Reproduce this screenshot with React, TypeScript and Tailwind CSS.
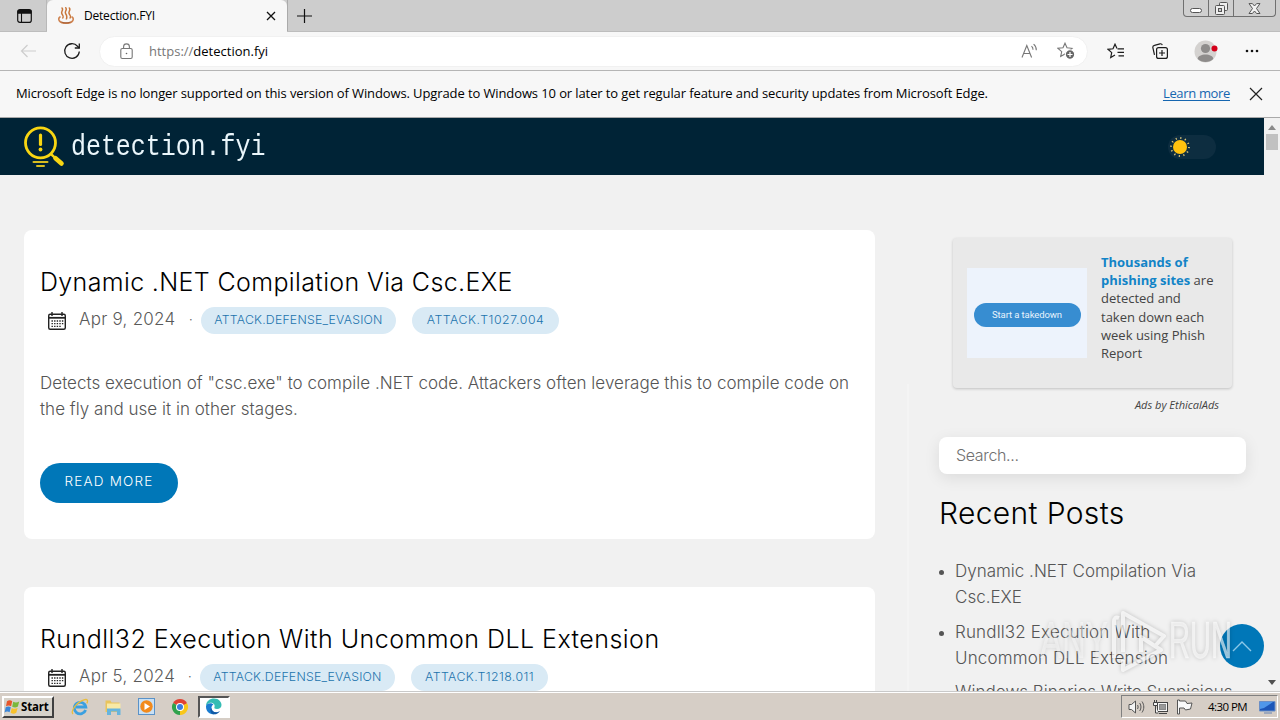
import type { ReactNode } from "react";

type Tag = { label: string; style: string };
type Post = { title: string; titleClass: string; date: string; dateClass: string; tags: Tag[]; body?: ReactNode };

const posts: Post[] = [
  {
    title: "Dynamic .NET Compilation Via Csc.EXE",
    titleClass: "tracking-[0.36px]",
    date: "Apr 9, 2024",
    dateClass: "w-[97px]",
    tags: [
      { label: "ATTACK.DEFENSE_EVASION", style: "w-[195px] tracking-[0.2px]" },
      { label: "ATTACK.T1027.004", style: "w-[147px] tracking-[0.55px]" },
    ],
    body: (
      <>
        Detects execution of "csc.exe" to compile .NET code. Attackers often leverage this to compile code on
        <br />
        the fly and use it in other stages.
      </>
    ),
  },
  {
    title: "Rundll32 Execution With Uncommon DLL Extension",
    titleClass: "tracking-[0.47px]",
    date: "Apr 5, 2024",
    dateClass: "w-[96px]",
    tags: [
      { label: "ATTACK.DEFENSE_EVASION", style: "w-[195px] tracking-[0.2px]" },
      { label: "ATTACK.T1218.011", style: "w-[137px] tracking-[0.4px]" },
    ],
  },
];

function TabStrip() {
  return (
    <div className="flex h-8 shrink-0 border-b border-[#bdbdbd] bg-[#cdcdcd]">
      <div className="flex w-[47px] items-center justify-center border-r border-[#b8b8b8]">
        <svg width="17" height="16" viewBox="0 0 16 16" fill="none" stroke="#111" className="ml-0.5 mt-px">
          <rect x="1.2" y="1.6" width="13.6" height="12.8" rx="2.2" strokeWidth="1.2" />
          <path d="M1.5 2.5h13v2.7h-13z" fill="#111" />
          <path d="M5 5v9" strokeWidth="1.1" />
        </svg>
      </div>
      <div className="-mb-px flex w-60 items-center rounded-t-md bg-[#f7f7f7] pl-[10px] pr-[9px]">
        <svg width="18" height="18" viewBox="0 0 18 18" fill="none" stroke="#c8763a" strokeLinecap="round">
          <path
            d="M5 1c2 2-1.6 3.8 0 6s1.500 2.500.8 4M8.700.8c2 2-1.600 3.800 0 6s1.500 2.800.8 5M12.300 1c2 2-1.600 3.800 0 6s1.500 2.500.8 4"
            strokeWidth="1.5"
          />
          <path d="M3 10C0 12 2.500 16.300 9 16.300S18 12 15 10" strokeWidth="1.6" stroke="#cf8350" />
          <path d="M5 15.200c2 .7 6 .7 8 0" strokeWidth="1.2" stroke="#a8623a" />
        </svg>
        <span className="ml-[9px] flex-1 text-[12px] tracking-[-0.2px]">Detection.FYI</span>
        <svg width="14" height="14" viewBox="0 0 14 14" stroke="#111" strokeWidth="1.3">
          <path d="m3 3 8 8M11 3l-8 8" />
        </svg>
      </div>
      <div className="flex items-center border-l border-[#aaa] pl-[8px]">
        <svg width="16" height="16" viewBox="0 0 16 16" stroke="#111" strokeWidth="1.2">
          <path d="M8.500 1v14M1 8h15" />
        </svg>
      </div>
      <div className="ml-auto mr-1 flex h-[17px] w-[93px] rounded-b border border-t-0 border-[#707070] bg-[#cfcfcf]">
        <div className="flex w-[25px] items-center justify-center border-r border-[#707070] pt-1">
          <div className="h-[5px] w-3 rounded-sm border border-[#555] bg-white" />
        </div>
        <div className="flex w-[25px] items-center justify-center border-r border-[#707070]">
          <svg width="13" height="13" viewBox="0 0 13 13" fill="#eee" stroke="#555">
            <rect x="4.5" y=".5" width="8" height="8" rx="1" />
            <rect x=".5" y="3.5" width="9" height="9" rx="1" />
            <rect x="3.5" y="6.5" width="3" height="3" fill="#ccc" />
          </svg>
        </div>
        <div className="flex flex-1 items-center justify-center">
          <svg width="13" height="11" viewBox="0 0 13 11" fill="#f2f2f2" stroke="#555">
            <path d="M1 .6h3.400L6.500 3 8.600.6H12L8.500 5.500l3.500 5H8.600L6.500 8l-2.100 2.500H1l3.500-5z" />
          </svg>
        </div>
      </div>
    </div>
  );
}

const star = "M8 1.200 10 5.800l5 .5-3.700 3.300 1 4.900L8 12l-4.300 2.500 1-4.900L1 6.300l5-.5z";

function Toolbar() {
  return (
    <div className="flex h-[39px] shrink-0 items-center border-b border-[#b5b5b5] bg-[#f7f7f7]">
      <svg className="ml-5" width="17" height="14" viewBox="0 0 17 14" fill="none" stroke="#cdcdcd" strokeWidth="1.2">
        <path d="M16 7H1.500M7.500 1l-6 6 6 6" />
      </svg>
      <svg className="ml-[26px]" width="18" height="18" viewBox="0 0 18 18" fill="none" stroke="#1c1c1c" strokeWidth="1.3">
        <path d="M16.300 9.500A7.300 7.300 0 1 1 14.500 4.200L16.300 6" />
        <path d="M16.300 1.500V6h-4.500" />
      </svg>
      <div className="ml-[18px] flex h-[31px] w-[989px] items-center rounded-full border border-[#f1f1f1] bg-white pl-5 pr-[11px]">
        <svg width="13" height="17" viewBox="0 0 13 17" fill="none" stroke="#777" strokeWidth="1.1">
          <rect x=".8" y="5.500" width="11.400" height="10" rx="1.500" />
          <path d="M3.600 5.500V3.800a2.900 2.900 0 0 1 5.800 0v1.700" />
          <circle cx="6.500" cy="10.500" r=".8" fill="#666" stroke="none" />
        </svg>
        <span className="ml-4 mt-px flex-1 text-[13px] text-black">
          <span className="text-[#777]">https://</span>detection.fyi
        </span>
        <svg width="17" height="16" viewBox="0 0 17 16" fill="none" stroke="#777" strokeWidth="1.1">
          <path d="M1 14.500 5.800 2.500l4.800 12M2.700 10.500h6.200M10.500 3.200c1.200 1 1.600 2.100 1.500 3.600M12.600 1.200c2 1.700 2.800 3.400 2.700 6" />
        </svg>
        <svg className="ml-[19px]" width="19" height="18" viewBox="0 0 19 18" fill="none" stroke="#777" strokeWidth="1.1">
          <path d={star} />
          <circle cx="13" cy="12.500" r="4.700" fill="#666" stroke="#fff" />
          <path d="M13 10v5M10.500 12.500h5" stroke="#fff" strokeWidth="1.2" />
        </svg>
      </div>
      <svg className="ml-[19px]" width="18" height="16" viewBox="0 0 18 16" fill="none" stroke="#1c1c1c" strokeWidth="1.2">
        <path d="M10 5.600 8 1.200 6 5.800l-5 .5 3.700 3.300-1 4.900L8 12" />
        <path d="M10.500 5.800H17M10.500 9.300H17M11.500 12.800H17" />
      </svg>
      <svg className="ml-[26px]" width="18" height="18" viewBox="0 0 18 18" fill="none" stroke="#1c1c1c" strokeWidth="1.2">
        <path d="M3.500 12.800 1.800 5.500a2 2 0 0 1 1.600-2.200L9 1.800a2 2 0 0 1 2.300 1.400" />
        <rect x="5.600" y="5.600" width="10.800" height="10.800" rx="2" />
        <path d="M11 8v6M8 11h6" />
      </svg>
      <svg className="ml-[25px]" width="24" height="24" viewBox="0 0 24 24">
        <circle cx="11.500" cy="12.500" r="11" fill="#d4d2d0" />
        <circle cx="11.500" cy="9.500" r="4.600" fill="#8e8c8b" />
        <path d="M3.700 20c0-6 15.600-6 15.600 0-4 4-11.600 4-15.600 0z" fill="#8e8c8b" />
        <circle cx="20.500" cy="9.500" r="3" fill="#d4001a" />
      </svg>
      <svg className="ml-[27px]" width="14" height="4" viewBox="0 0 14 4" fill="#111">
        <circle cx="2" cy="2" r="1.300" />
        <circle cx="7" cy="2" r="1.300" />
        <circle cx="12" cy="2" r="1.300" />
      </svg>
    </div>
  );
}

function Notice() {
  return (
    <div className="flex h-[47px] shrink-0 items-center border-b border-[#a9a9a9] bg-[#f7f7f7] pl-4 pr-[17px] text-[13px]">
      <span className="flex-1 whitespace-nowrap tracking-[-0.109px]">
        Microsoft Edge is no longer supported on this version of Windows. Upgrade to Windows 10 or later to get regular
        feature and security updates from Microsoft Edge.
      </span>
      <span className="mr-[19px] tracking-[-0.34px] text-[#1566b0] underline underline-offset-2">Learn more</span>
      <svg width="14" height="14" viewBox="0 0 14 14" stroke="#222" strokeWidth="1.2">
        <path d="m1 1 12 12M13 1 1 13" />
      </svg>
    </div>
  );
}

function SiteHeader() {
  return (
    <header className="flex h-[57px] items-center bg-[#002336] pl-6 pr-12">
      <svg width="41" height="42" viewBox="0 0 41 42" fill="none" stroke="#f8d512" strokeLinecap="round">
        <circle cx="16.500" cy="16.800" r="15" strokeWidth="2.8" />
        <path d="M16.500 9v9.500" strokeWidth="3.2" />
        <circle cx="16.500" cy="23.500" r="1.900" fill="#f8d512" stroke="none" />
        <path d="m27.500 28.500 2.500 2.300" strokeWidth="2.5" />
        <path d="m31.500 32.200 6 5.300" strokeWidth="4.6" />
        <path d="M9.500 36h14M13 40h7" strokeWidth="2" stroke="#d9bd20" />
      </svg>
      <span className="ml-[6px] mt-[3px] origin-center scale-y-115 font-[Liberation_Mono,monospace] text-[25px] leading-[30px] tracking-[-0.05px] text-[#eaf6fb]">
        detection.fyi
      </span>
      <div className="ml-auto flex h-6 w-12 items-center rounded-full bg-[#0d2d40]">
        <svg width="24" height="24" viewBox="0 0 24 24">
          <circle cx="12" cy="12" r="9" fill="none" stroke="#e0c878" strokeWidth="1.8" strokeDasharray="1.2 3.512" />
          <circle cx="12" cy="12" r="7" fill="#ffc20e" />
        </svg>
      </div>
    </header>
  );
}

function CalendarIcon() {
  return (
    <svg className="mt-px" width="20" height="18" viewBox="0 0 20 18" fill="none" stroke="#222" strokeWidth="1.4">
      <rect x="1.700" y="2.200" width="16.600" height="15" rx="1.500" />
      <path d="M1.700 5.800h16.600" strokeWidth="1.8" />
      <path d="M5 0v4M15 0v4" />
      <path d="M4.500 9h12M4.500 11.700h12M4.500 14.400h9.500" strokeDasharray="1.400 1.200" strokeWidth="1.3" />
    </svg>
  );
}

function PostCard({ post }: { post: Post }) {
  return (
    <article className="h-[309px] shrink-0 rounded-lg bg-white px-4 pt-[34px]">
      <h2 className={`whitespace-nowrap text-[25px] font-light leading-9 text-black ${post.titleClass}`}>{post.title}</h2>
      <div className="mt-[6px] flex h-7 items-center pl-[7px] text-[17px] font-light text-[#5a5a5a]">
        <CalendarIcon />
        <span className={`-mt-px ml-3 whitespace-nowrap tracking-[0.24px] ${post.dateClass}`}>{post.date}</span>
        <span className="ml-[13px] w-3 text-[13px]">·</span>
        {post.tags.map((tag) => (
          <span
            key={tag.label}
            className={`mr-4 flex h-[27px] items-center justify-center rounded-full bg-[#d9eaf5] text-[12.3px] text-[#1c74ad] ${tag.style}`}
          >
            {tag.label}
          </span>
        ))}
      </div>
      {post.body && (
        <>
          <p className="mt-[36px] whitespace-nowrap text-[17px] font-light leading-[26px] tracking-[0.024px] text-[#555]">
            {post.body}
          </p>
          <button className="mt-[41px] flex h-10 w-[138px] items-center justify-center rounded-full bg-[#0077b8] pb-[3px] text-[13.5px] font-light tracking-[1.2px] text-white">
            READ MORE
          </button>
        </>
      )}
    </article>
  );
}

function Recent({ children }: { children: ReactNode }) {
  return (
    <li className="flex">
      <span className="mr-[11px] mt-[12px] size-[5px] shrink-0 rounded-full bg-[#555]" />
      <span>{children}</span>
    </li>
  );
}

function Sidebar() {
  return (
    <aside className="flex w-[308px] flex-col">
      <div className="ml-[14px] mt-[63px] flex h-[150px] w-[279px] shrink-0 rounded-sm bg-[#e9e9e9] px-[14px] pt-[14px] font-[Open_Sans,Noto_Sans,sans-serif] shadow-[0_1px_3px_rgba(0,0,0,0.2)]">
        <div className="mt-4 flex h-[90px] w-[120px] shrink-0 items-center justify-center bg-[#edf3fc]">
          <span className="mt-1 flex h-6 w-[107px] items-center justify-center rounded-full bg-[#378dd1] font-[Roboto,sans-serif] text-[9.5px] tracking-[-0.1px] text-[#e8f3fc]">
            Start a takedown
          </span>
        </div>
        <p className="ml-[14px] mt-px whitespace-nowrap text-[13px] leading-[18.2px] text-[#444]">
          <b className="text-[#1284c7]">
            Thousands of
            <br />
            phishing sites
          </b>{" "}
          are
          <br />
          detected and
          <br />
          taken down each
          <br />
          week using Phish
          <br />
          Report
        </p>
      </div>
      <p className="mr-7 mt-[9px] text-right font-[Open_Sans,Noto_Sans,sans-serif] text-[11px] italic leading-4 text-[#444]">
        Ads by EthicalAds
      </p>
      <div className="mt-6 flex h-[37px] w-[307px] shrink-0 items-center rounded-lg bg-white pb-0.5 pl-[17px] text-[16px] font-light tracking-[-0.35px] text-[#707070] shadow-[0_4px_16px_rgba(0,0,0,0.09)]">
        Search...
      </div>
      <h2 className="mt-[21px] text-[30px] font-light leading-9 tracking-[0.35px] text-black">Recent Posts</h2>
      <ul className="mt-[27px] flex flex-col gap-2 whitespace-nowrap text-[17px] font-light leading-[26.3px] text-[#555]">
        <Recent>
          Dynamic .NET Compilation Via
          <br />
          Csc.EXE
        </Recent>
        <Recent>
          <span className="tracking-[0.15px]">
            Rundll32 Execution With
            <br />
            Uncommon DLL Extension
          </span>
        </Recent>
        <li className="pl-4">Windows Binaries Write Suspicious</li>
      </ul>
    </aside>
  );
}

function Scrollbar() {
  return (
    <div className="flex w-4 flex-col items-center bg-[#f1f1f1]">
      <svg className="mt-[7px]" width="8" height="5" viewBox="0 0 8 5" fill="#8a8a8a">
        <path d="M0 5 4 0l4 5z" />
      </svg>
      <div className="mt-1 h-4 w-3 bg-[#c1c1c1]" />
      <svg className="mb-[6px] mt-auto" width="8" height="5" viewBox="0 0 8 5" fill="#505050">
        <path d="M0 0h8L4 5z" />
      </svg>
    </div>
  );
}

function Watermark() {
  return (
    <svg
      className="absolute left-[1036px] top-[604px] font-[Liberation_Sans,sans-serif] drop-shadow-[0_0_2px_rgba(0,0,0,0.3)]"
      width="200"
      height="74"
      viewBox="0 0 200 74"
    >
      <g fill="#fff" fontSize="51">
        <text x="4" y="54" textLength="68" lengthAdjust="spacingAndGlyphs" fillOpacity="0.4">ANY</text>
        <text x="133" y="54" textLength="63" lengthAdjust="spacingAndGlyphs" fillOpacity="0.6" stroke="#fff" strokeOpacity="0.3">RUN</text>
      </g>
      <path
        d="M78 54V18q0-6 5-4M87 48V9l41 23-8 9M87 9v27M87 56v10l38-20-20-13v15"
        fill="none"
        stroke="#fff"
        strokeOpacity="0.7"
        strokeWidth="4"
        strokeLinejoin="round"
      />
    </svg>
  );
}

function Taskbar() {
  return (
    <div className="flex h-7 shrink-0 items-center border-t border-white bg-[#d6cec6] px-[2px]">
      <div className="flex h-[22px] w-[52px] items-center border-2 border-b-[#404040] border-l-white border-r-[#404040] border-t-white bg-[#d6d2ca]">
        <svg className="shrink-0" width="17" height="16" viewBox="0 0 16 16">
          <path d="M2.500 2.200c2-1.200 3.800-1 5.200 0L6.600 7.300c-1.600-1-3.300-1-5.100 0z" fill="#e8562a" />
          <path d="M8.700 2.800c2 1.200 3.800 1 6-.2l-1.300 5c-2 1.200-3.800 1-5.700.1z" fill="#7ab83c" />
          <path d="M1.200 8.300c2-1.200 3.600-1 5.100 0l-1.200 5c-1.500-1-3.200-1-5 .1z" fill="#3b86d8" />
          <path d="M7.300 9c2 1.200 3.800 1 5.800 0l-1.300 4.800c-2 1.300-3.800 1-5.700 0z" fill="#f8c22c" />
        </svg>
        <span className="text-[11.5px] font-bold leading-4 tracking-[-0.2px] text-black">Start</span>
      </div>
      <svg className="ml-[17px]" width="18" height="18" viewBox="0 0 18 18" fill="none">
        <path d="M14.600 12A5.800 5.800 0 1 1 14.800 9H5" stroke="#3ba0e0" strokeWidth="2.8" />
        <path d="M2 16C-1 13 6 4 13 1.800c4-1.200 4 1.500 2.800 3.500" stroke="#e9bd3c" strokeWidth="1.3" />
      </svg>
      <svg className="ml-[15px]" width="18" height="18" viewBox="0 0 18 18">
        <path d="M1.500 2.500h5l1 2h8V14h-14z" fill="#e9c45c" />
        <path d="M3 5.500h13.500V12H3z" fill="#f8e9a6" />
        <path d="M3 10.500h13.500V17h-3.500v-3.500H7V17H3z" fill="#66b4de" />
      </svg>
      <svg className="ml-4" width="17" height="17" viewBox="0 0 17 17">
        <rect x=".5" y=".5" width="16" height="16" fill="#c9e0f4" stroke="#5a92c8" />
        <circle cx="8.500" cy="8.500" r="6.200" fill="#f28a1c" />
        <path d="M6.500 5v7l5.500-3.500z" fill="#fff" />
      </svg>
      <svg className="ml-4" width="18" height="18" viewBox="0 0 18 18">
        <path d="M9 9 2.070 5a8 8 0 0 1 13.860 0z" fill="#e04234" />
        <path d="M9 9 15.930 5A8 8 0 0 1 9 17z" fill="#f9c718" />
        <path d="M9 9v8A8 8 0 0 1 2.070 5z" fill="#2fa24c" />
        <path d="M9 5h6.900L9 9z" fill="#e04234" />
        <circle cx="9" cy="9" r="4" fill="#fff" />
        <circle cx="9" cy="9" r="3" fill="#3b7de0" />
      </svg>
      <div className="ml-[9px] flex h-[22px] w-8 items-center justify-center border-2 border-b-white border-l-[#555] border-r-white border-t-[#555] bg-white">
        <svg className="-ml-0.5" width="17" height="17" viewBox="0 0 17 17">
          <path
            d="M1 8C1 3 5 .5 9 .5c5 0 7.500 3.500 7.500 6.500 0 2.500-2 4-4.500 4s-3-1-2.500-2C10.500 6 7 4 4 5.200 2.500 5.800 1.300 7 1 8z"
            fill="#35bdb4"
          />
          <path d="M1 8c.5-2.500 5-4 7.500-1.500C5 8 6 14.500 12 14.500c-2 2.200-5 2.300-7.500.8C2 13.800.8 11 1 8z" fill="#1a7cd0" />
          <path d="M6.300 10c.3 4 4.700 5.600 8.700 3-2 3.400-5.200 3.800-7.500 3C5 14.500 5 12 6.300 10z" fill="#1159a5" />
        </svg>
      </div>
      <div className="ml-auto flex h-[23px] w-[157px] items-center border border-b-white border-l-[#808080] border-r-white border-t-[#808080] pl-[6px] pr-px">
        <svg width="17" height="14" viewBox="0 0 17 14" fill="#f4f4f4" stroke="#555">
          <path d="M1 4.500h2.500L7.500 1v12l-4-3.500H1z" />
          <path d="M9.500 5c.8 1.200.8 2.800 0 4M11.700 3c1.700 2.500 1.700 5.500 0 8M14 1.500c2.400 3.500 2.400 7.500 0 11" fill="none" />
        </svg>
        <svg className="ml-[7px]" width="17" height="16" viewBox="0 0 17 16" fill="#f4f4f4" stroke="#444">
          <rect x="5.500" y="3.500" width="10" height="9" />
          <rect x="7.500" y="5.500" width="6" height="5" fill="#999" stroke="#888" />
          <path d="M7 14.500h8M1.500 3.500h4v3h-4zM2.500 1v2M4.500 1v2M3.500 7v7h3" />
        </svg>
        <svg className="ml-[7px]" width="17" height="16" viewBox="0 0 17 16" fill="#fafafa" stroke="#555">
          <path d="M1.500 1v14h2V9h4.500l1.500 2 5-1 1.500-6-5 .5L9.500 2h-6V1z" />
        </svg>
        <span className="ml-[15px] whitespace-nowrap text-[11.5px] tracking-[-0.55px] text-black">4:30 PM</span>
        <svg className="ml-auto" width="17" height="14" viewBox="0 0 17 14">
          <path d="M.5 1.500h15.500v9.500H.5z" fill="#1c56b8" stroke="#6b8fc6" />
          <path d="M1 2h13L5 8 1 9z" fill="#4f97ea" />
          <path d="M5 13h8" stroke="#8a9bb8" strokeWidth="1.5" />
        </svg>
      </div>
    </div>
  );
}

export default function App() {
  return (
    <div className="relative flex h-[720px] w-[1280px] flex-col overflow-hidden bg-[#f1f1f1] font-[Open_Sans,Noto_Sans,sans-serif] text-black">
      <TabStrip />
      <Toolbar />
      <Notice />
      <div className="flex h-[574px] shrink-0 overflow-hidden border-b border-[#c9c9c9] font-[Inter,sans-serif]">
        <div className="flex w-[1264px] flex-col overflow-hidden">
          <SiteHeader />
          <main className="flex min-h-0 flex-1 pl-6">
            <div className="flex w-[851px] flex-col gap-12 pt-[55px]">
              {posts.map((post) => (
                <PostCard key={post.title} post={post} />
              ))}
            </div>
            <div className="ml-8 mr-[30px] mt-[209px] w-[2px] bg-[#f4f4f4]" />
            <Sidebar />
          </main>
        </div>
        <Scrollbar />
      </div>
      <Taskbar />
      <button className="absolute left-[1220px] top-[624px] flex size-11 items-center justify-center rounded-full bg-[#0077b8]">
        <svg width="20" height="12" viewBox="0 0 20 12" fill="none" stroke="#8cc8e8" strokeWidth="1.4">
          <path d="m1 11 9-9 9 9" />
        </svg>
      </button>
      <Watermark />
    </div>
  );
}
